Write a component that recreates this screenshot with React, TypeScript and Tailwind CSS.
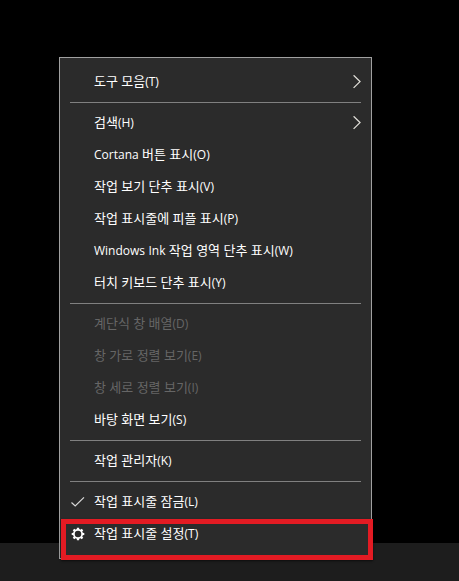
import { clsx } from "clsx";

type MenuItem = {
  label: string;
  icon?: "check" | "gear";
  submenu?: boolean;
  disabled?: boolean;
  marked?: boolean;
};

// each inner list is one group, groups are split by a separator
const groups: MenuItem[][] = [
  [{ label: "도구 모음(T)", submenu: true }],
  [
    { label: "검색(H)", submenu: true },
    { label: "Cortana 버튼 표시(O)" },
    { label: "작업 보기 단추 표시(V)" },
    { label: "작업 표시줄에 피플 표시(P)" },
    { label: "Windows Ink 작업 영역 단추 표시(W)" },
    { label: "터치 키보드 단추 표시(Y)" },
  ],
  [
    { label: "계단식 창 배열(D)", disabled: true },
    { label: "창 가로 정렬 보기(E)", disabled: true },
    { label: "창 세로 정렬 보기(I)", disabled: true },
    { label: "바탕 화면 보기(S)" },
  ],
  [{ label: "작업 관리자(K)" }],
  [
    { label: "작업 표시줄 잠금(L)", icon: "check" },
    { label: "작업 표시줄 설정(T)", icon: "gear", marked: true },
  ],
];

const CheckIcon = () => (
  <svg viewBox="0 0 16 16" className="size-4" fill="none" aria-hidden="true">
    <path d="M1.5 8.5 5.2 12 14 3.4" stroke="#d8d8d8" strokeWidth="1.2" />
  </svg>
);

const teeth = [0, 45, 90, 135, 180, 225, 270, 315];

const GearIcon = () => (
  <svg viewBox="0 0 16 16" className="size-4" fill="none" aria-hidden="true">
    <circle cx="8" cy="8" r="4.1" stroke="#fff" strokeWidth="1.7" />
    {teeth.map((angle) => (
      <path
        key={angle}
        d="M6.7 4 6.9 1.7h2.2L9.3 4z"
        fill="#fff"
        transform={`rotate(${angle} 8 8)`}
      />
    ))}
  </svg>
);

const ChevronIcon = () => (
  <svg viewBox="0 0 8 14" className="h-3.5 w-2" fill="none" aria-hidden="true">
    <path d="M.6.3 7 6.6 .6 12.9" stroke="#e0ded8" strokeWidth="1.3" />
  </svg>
);

// Latin letters look too big next to Hangul, so they get a smaller size
const Label = ({ text }: { text: string }) => (
  <span className="flex-1 pb-0.5 whitespace-nowrap">
    {text.split(/([A-Za-z()]+)/).map((part, index) =>
      index % 2 === 1 ? (
        <span key={index} className="text-xs">
          {part}
        </span>
      ) : (
        part
      ),
    )}
  </span>
);

const MenuRow = ({ item }: { item: MenuItem }) => (
  <li role="none" className="relative">
    <button
      type="button"
      role={item.icon === "check" ? "menuitemcheckbox" : "menuitem"}
      aria-checked={item.icon === "check" ? true : undefined}
      aria-haspopup={item.submenu ? "menu" : undefined}
      disabled={item.disabled}
      className={clsx(
        "flex h-8 w-full items-center gap-2 px-2.5 text-left text-[13px] leading-4",
        item.disabled ? "text-[#666666]" : "text-white",
      )}
    >
      <span className="w-4 shrink-0">
        {item.icon === "check" && <CheckIcon />}
        {item.icon === "gear" && <GearIcon />}
      </span>
      <Label text={item.label} />
      {item.submenu && <ChevronIcon />}
    </button>
    {/* Red frame around the settings entry */}
    {item.marked && (
      <div className="pointer-events-none absolute -right-0.5 -bottom-2.5 left-px top-px border-5 border-[#e31b23] shadow-[0_1px_2px_rgba(0,0,0,0.6)]" />
    )}
  </li>
);

const App = () => {
  return (
    <div className="relative flex min-h-screen flex-col bg-black font-['Open_Sans','Noto_Sans_CJK_KR',sans-serif]">
      <main className="flex-1">
        <div
          role="menu"
          className="absolute left-[59px] right-[87px] top-[57px] border border-[#a0a0a0] bg-[#2b2b2b] py-2"
        >
          {groups.map((items, index) => (
            <div key={index} role="none">
              {index > 0 && (
                <hr className="mx-2.5 my-1 border-t border-[#808080]" />
              )}
              <ul role="group">
                {items.map((item) => (
                  <MenuRow key={item.label} item={item} />
                ))}
              </ul>
            </div>
          ))}
        </div>
      </main>
      {/* Taskbar */}
      <footer className="h-[38px] bg-[#1d1d1d]" />
    </div>
  );
};

export default App;
